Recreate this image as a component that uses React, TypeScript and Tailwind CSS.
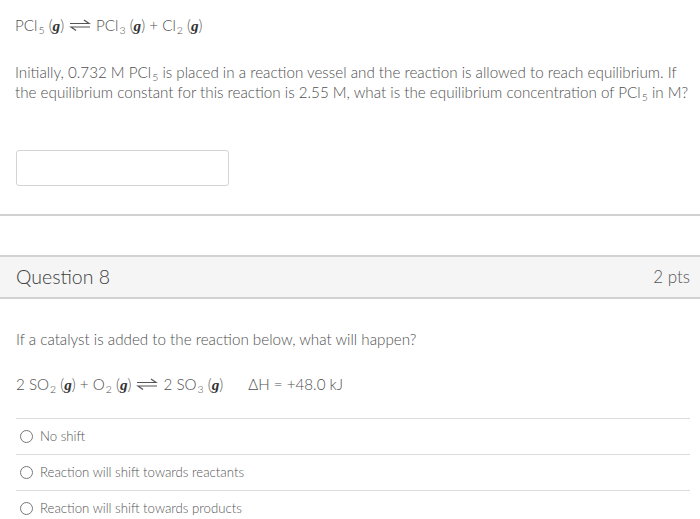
import React from "react";

const G = () => (
  <span className="font-['Liberation_Serif',serif] font-bold italic text-[#333]">g</span>
);

const Gas = () => (
  <span>
    (<G />)
  </span>
);

const Sub = ({ children }: { children: React.ReactNode }) => (
  <span className="inline-block text-[10.5px] leading-[10px] align-[-3px] ml-[1px]">{children}</span>
);

const Eq = () => (
  <svg width="22" height="12" viewBox="0 0 22 12" className="inline-block mx-[5px] align-middle" fill="none" stroke="#555" strokeWidth="1.2">
    <path d="M1 4.5 H20 L15 1" />
    <path d="M21 8 H2 L7 11.5" />
  </svg>
);

const Radio = () => (
  <span className="inline-block w-[13px] h-[13px] rounded-full border border-[#777] bg-white mr-[7px]" />
);

export default function App() {
  return (
    <div className="w-[700px] h-[519px] overflow-hidden bg-white font-['Lato',sans-serif] font-light text-[#4f4f4f]">
      <div className="pl-[15px] pr-[4px] pt-[15px]">
        <div className="h-[20px] leading-[20px] text-[15.2px] flex items-center">
          <span>
            PCl<Sub>5</Sub> <Gas />
          </span>
          <Eq />
          <span>
            PCl<Sub>3</Sub> <Gas /> + Cl<Sub>2</Sub> <Gas />
          </span>
        </div>
        <p className="mt-[27px] text-[15.2px] leading-[20px]">
          Initially, 0.732 M PCl<Sub>5</Sub> is placed in a reaction vessel and the reaction is allowed to reach equilibrium. If the equilibrium constant for this reaction is 2.55 M, what is the equilibrium concentration of PCl<Sub>5</Sub> in M?
        </p>
        <div className="mt-[48px] ml-[1px] w-[213px] h-[36px] border border-[#d4d4d4] rounded-[3px] bg-white" />
      </div>
      <div className="mt-[28px] border-t-2 border-[#d2d2d2]" />
      <div className="mt-[39px] border-t-2 border-b-2 border-[#d2d2d2] bg-[#f5f5f5] h-[44px] flex items-center justify-between px-[16px]">
        <span className="text-[19.5px] text-[#3d3d3d]">Question 8</span>
        <span className="text-[17px] text-[#555] mr-[-6px]">2 pts</span>
      </div>
      <div className="px-[16px]">
        <p className="mt-[30px] text-[15.2px] leading-[20px]">
          If a catalyst is added to the reaction below, what will happen?
        </p>
        <div className="mt-[25px] h-[20px] leading-[20px] text-[15.2px] flex items-center">
          <span>
            2 SO<Sub>2</Sub> <Gas /> + O<Sub>2</Sub> <Gas />
          </span>
          <Eq />
          <span>
            2 SO<Sub>3</Sub> <Gas />
          </span>
          <span className="ml-[25px]">ΔH = +48.0 kJ</span>
        </div>
        <div className="mt-[24px] w-[674px] text-[13.2px] text-[#555]">
          {["No shift", "Reaction will shift towards reactants", "Reaction will shift towards products"].map((t) => (
            <div key={t} className="border-t border-[#dcdcdc] h-[36px] flex items-center pl-[4px]">
              <Radio />
              <span>{t}</span>
            </div>
          ))}
        </div>
      </div>
    </div>
  );
}
